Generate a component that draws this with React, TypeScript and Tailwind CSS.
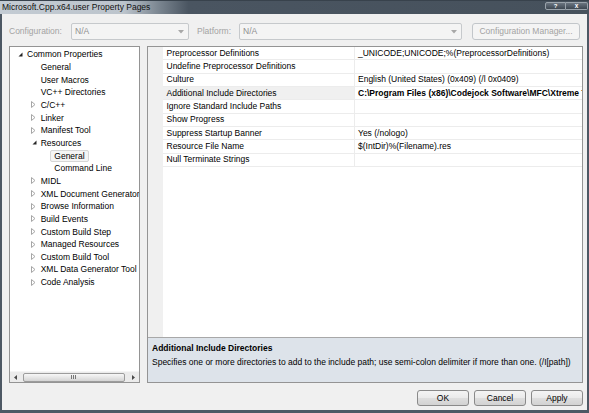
import React from "react";

// tree rows of the property page navigator
type TreeItem = {
  label: string;
  level: 0 | 1 | 2;
  expander?: "open" | "closed";
  selected?: boolean;
};

const treeItems: TreeItem[] = [
  { label: "Common Properties", level: 0, expander: "open" },
  { label: "General", level: 1 },
  { label: "User Macros", level: 1 },
  { label: "VC++ Directories", level: 1 },
  { label: "C/C++", level: 1, expander: "closed" },
  { label: "Linker", level: 1, expander: "closed" },
  { label: "Manifest Tool", level: 1, expander: "closed" },
  { label: "Resources", level: 1, expander: "open" },
  { label: "General", level: 2, selected: true },
  { label: "Command Line", level: 2 },
  { label: "MIDL", level: 1, expander: "closed" },
  { label: "XML Document Generator", level: 1, expander: "closed" },
  { label: "Browse Information", level: 1, expander: "closed" },
  { label: "Build Events", level: 1, expander: "closed" },
  { label: "Custom Build Step", level: 1, expander: "closed" },
  { label: "Managed Resources", level: 1, expander: "closed" },
  { label: "Custom Build Tool", level: 1, expander: "closed" },
  { label: "XML Data Generator Tool", level: 1, expander: "closed" },
  { label: "Code Analysis", level: 1, expander: "closed" },
];

const indent = ["pl-[6px]", "pl-[19.7px]", "pl-[33.3px]"];

// property grid rows
type Prop = { name: string; value: string; bold?: boolean; selected?: boolean };

const props: Prop[] = [
  { name: "Preprocessor Definitions", value: "_UNICODE;UNICODE;%(PreprocessorDefinitions)" },
  { name: "Undefine Preprocessor Definitions", value: "" },
  { name: "Culture", value: "English (United States) (0x409) (/l 0x0409)" },
  {
    name: "Additional Include Directories",
    value: "C:\\Program Files (x86)\\Codejock Software\\MFC\\Xtreme ToolkitPro v15.0.2\\Source",
    bold: true,
    selected: true,
  },
  { name: "Ignore Standard Include Paths", value: "" },
  { name: "Show Progress", value: "" },
  { name: "Suppress Startup Banner", value: "Yes (/nologo)" },
  { name: "Resource File Name", value: "$(IntDir)%(Filename).res" },
  { name: "Null Terminate Strings", value: "" },
];

function Expander({ kind }: { kind?: "open" | "closed" }) {
  return (
    <div className="w-[7px] h-full flex items-center shrink-0">
      {kind === "open" && (
        <svg width="5" height="5" viewBox="0 0 5 5" className="ml-[2px]">
          <polygon points="4.5,0.5 4.5,4.5 0.5,4.5" fill="#262626" />
        </svg>
      )}
      {kind === "closed" && (
        <svg width="5" height="7" viewBox="0 0 5 7" className="ml-[1.5px]">
          <polygon points="0.5,0.5 4,3.5 0.5,6.5" fill="#fff" stroke="#a6a6a6" strokeWidth="1" />
        </svg>
      )}
    </div>
  );
}

function Combo({ width }: { width: string }) {
  return (
    <div
      className={`${width} h-[17px] flex items-center justify-between border border-[#c6c9cc] rounded-[2px] bg-[#f4f4f4] pl-[3px] pr-[4px] text-[#8f8f8f]`}
    >
      <span>N/A</span>
      <svg width="6" height="4" viewBox="0 0 6 4">
        <polygon points="0,0 6,0 3,3.5" fill="#a8a8a8" />
      </svg>
    </div>
  );
}

function DialogButton({ label }: { label: string }) {
  return (
    <div className="w-[52px] h-[16px] flex items-center justify-center rounded-[3px] border border-[#8a8a8a] bg-[linear-gradient(to_bottom,#f4f4f4_0%,#ebebeb_48%,#dedede_52%,#d2d2d2_100%)]">
      {label}
    </div>
  );
}

export default function App() {
  return (
    <div className="w-[589px] h-[413px] flex flex-col overflow-hidden text-[8.5px] text-black font-['Liberation_Sans',Arial,sans-serif]">
      {/* 타이틀 바 */}
      <div className="h-[14px] shrink-0 flex items-start justify-between border-t border-[#38424c] bg-[linear-gradient(to_right,#c3cbd3_0%,#bcc4cc_21%,#7a8590_27%,#4a5561_32%,#46515c_100%)]">
        <span className="pl-[2px] leading-[12px] text-[#111]">Microsoft.Cpp.x64.user Property Pages</span>
        <div className="flex mt-[1px] mr-[1px] h-[8px]">
          <div className="w-[21px] h-full flex items-center justify-center border border-[#9aa3ab] rounded-l-[2px] bg-[linear-gradient(to_bottom,#6b7580,#3e4852)] text-white text-[6px] font-bold leading-none">
            ?
          </div>
          <div className="w-[22px] h-full flex items-center justify-center border border-l-0 border-[#9aa3ab] rounded-r-[2px] bg-[linear-gradient(to_bottom,#6b7580,#3e4852)] text-white text-[6.5px] font-bold leading-none">
            x
          </div>
        </div>
      </div>

      {/* 본문 */}
      <div className="flex-1 flex flex-col bg-[#f0f0f0] border-l-2 border-r-2 border-b-[3px] border-[#4d5864] pl-[7px] pr-[4px] pt-[9px] pb-[4px]">
        {/* 구성 선택 줄 */}
        <div className="h-[17px] flex items-center shrink-0">
          <span className="w-[62px] text-[#a3a3a3]">Configuration:</span>
          <Combo width="w-[118px]" />
          <span className="w-[50px] pl-[8px] text-[#a3a3a3]">Platform:</span>
          <Combo width="w-[223px]" />
          <div className="ml-[10px] w-[108px] h-[17px] flex items-center justify-center border border-[#c2c6ca] rounded-[3px] bg-[#f4f4f4] text-[#a3a3a3]">
            Configuration Manager...
          </div>
        </div>

        {/* 트리 + 속성 그리드 */}
        <div className="mt-[6px] h-[337px] flex gap-[7px] shrink-0">
          {/* 트리 */}
          <div className="w-[131px] flex flex-col border border-[#949494] bg-white">
            <div className="flex-1 pt-[1px] overflow-hidden">
              {treeItems.map((item, i) => (
                <div key={i} className={`h-[12.67px] flex items-center ${indent[item.level]}`}>
                  <Expander kind={item.expander} />
                  <span
                    className={`whitespace-nowrap px-[3px] leading-[10px] border rounded-[2px] ${
                      item.selected ? "border-[#d6d6d6] bg-[#f5f5f5]" : "border-transparent"
                    }`}
                  >
                    {item.label}
                  </span>
                </div>
              ))}
            </div>
            {/* 가로 스크롤바 */}
            <div className="h-[11px] flex items-center bg-[#ebebeb] border-t border-[#f5f5f5]">
              <div className="w-[11px] h-full flex items-center justify-center">
                <svg width="3" height="5" viewBox="0 0 3 5">
                  <polygon points="3,0 3,5 0,2.5" fill="#4a4a4a" />
                </svg>
              </div>
              <div className="flex-1 h-[9px] ml-[2px] mr-[3px] flex items-center justify-center rounded-[2px] border border-[#9c9c9c] bg-[linear-gradient(to_bottom,#f7f7f7_0%,#e6e6e6_50%,#d4d4d4_100%)]">
                <svg width="6" height="4" viewBox="0 0 6 4">
                  <line x1="0.5" y1="0" x2="0.5" y2="4" stroke="#777" />
                  <line x1="2.5" y1="0" x2="2.5" y2="4" stroke="#777" />
                  <line x1="4.5" y1="0" x2="4.5" y2="4" stroke="#777" />
                </svg>
              </div>
              <div className="w-[11px] h-full flex items-center justify-center">
                <svg width="3" height="5" viewBox="0 0 3 5">
                  <polygon points="0,0 0,5 3,2.5" fill="#4a4a4a" />
                </svg>
              </div>
            </div>
          </div>

          {/* 속성 그리드 */}
          <div className="w-[436px] flex flex-col border border-[#949494] bg-white">
            <div className="flex-1 flex overflow-hidden">
              <div className="w-[15px] h-full bg-[#f0f0f0] shrink-0" />
              <div className="flex-1 flex flex-col overflow-hidden">
                {props.map((p, i) => (
                  <div key={i} className="h-[13.33px] flex border-b border-[#ececec]">
                    <div
                      className={`w-[192px] shrink-0 flex items-center pl-[3.5px] border-r border-[#ececec] whitespace-nowrap ${
                        p.selected ? "bg-[#f0f0f0]" : ""
                      }`}
                    >
                      {p.name}
                    </div>
                    <div
                      className={`flex-1 flex items-center pl-[3px] whitespace-nowrap overflow-hidden ${
                        p.bold ? "font-bold" : ""
                      }`}
                    >
                      {p.value}
                    </div>
                  </div>
                ))}
              </div>
            </div>
            {/* 설명 영역 */}
            <div className="h-[45px] shrink-0 border-t border-[#a8a8a8] bg-[#dde3ea] pl-[4px] pt-[4px]">
              <div className="leading-[13.5px] font-bold">Additional Include Directories</div>
              <div className="leading-[13.5px] whitespace-nowrap">
                Specifies one or more directories to add to the include path; use semi-colon delimiter if more than one. (/I[path])
              </div>
            </div>
          </div>
        </div>

        {/* 버튼 */}
        <div className="mt-[7px] h-[16px] flex justify-end gap-[5px] shrink-0">
          <DialogButton label="OK" />
          <DialogButton label="Cancel" />
          <DialogButton label="Apply" />
        </div>
      </div>
    </div>
  );
}
